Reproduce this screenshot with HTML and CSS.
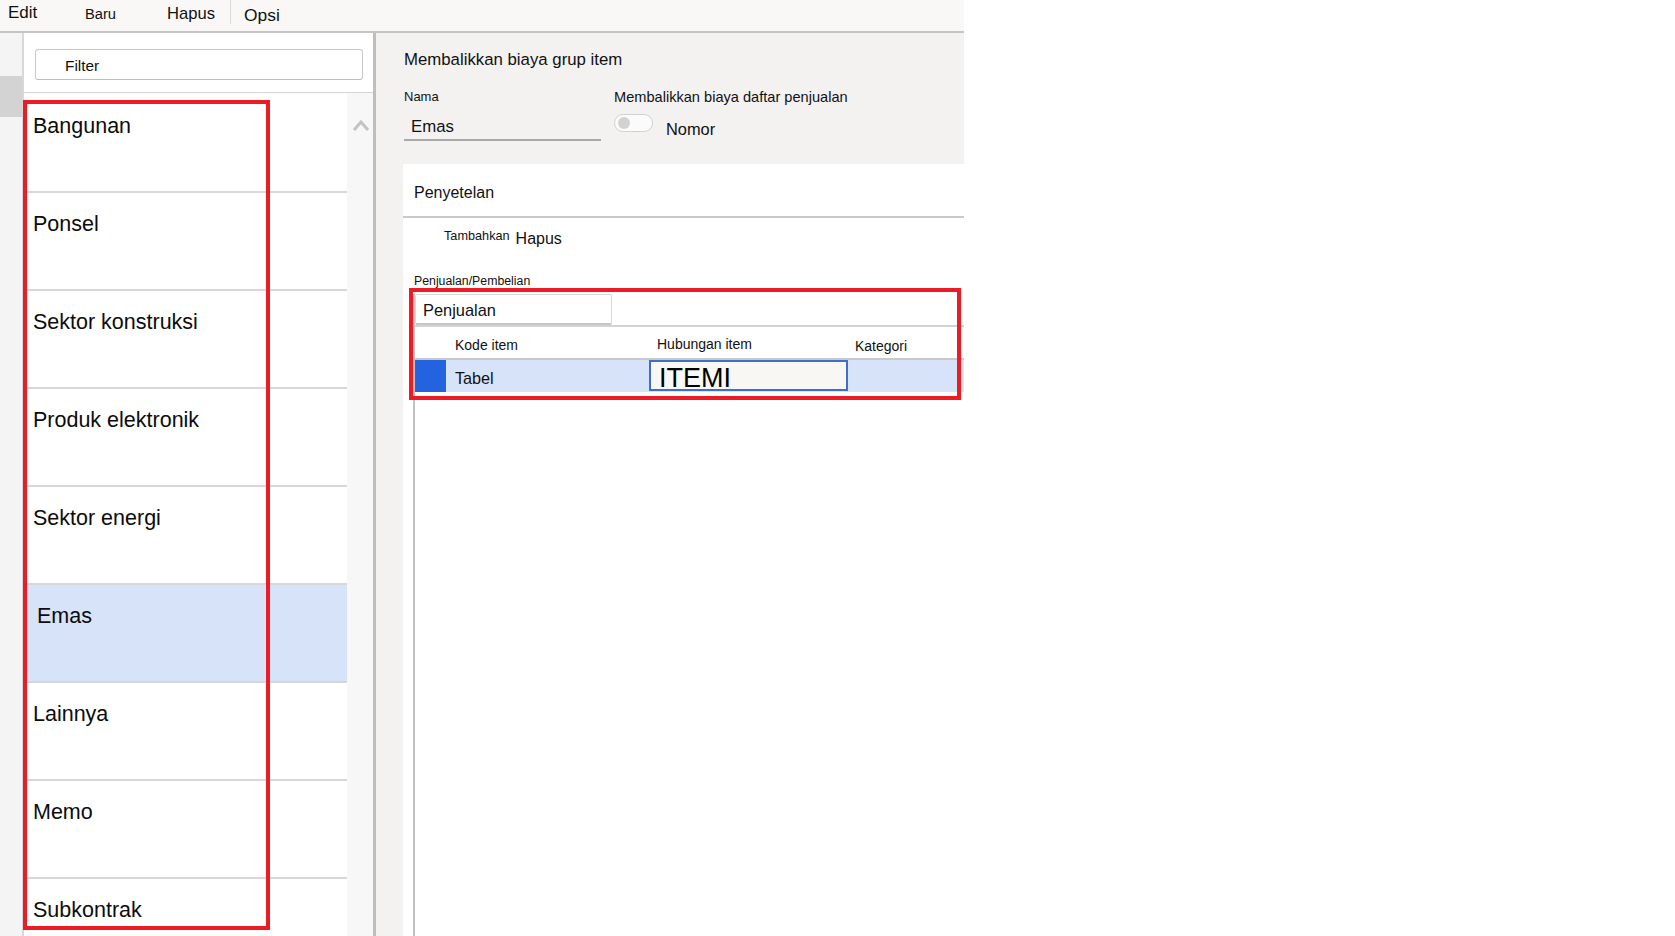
FILE: index.html
```html
<!DOCTYPE html>
<html lang="id">
<head>
<meta charset="utf-8">
<title>Membalikkan biaya grup item</title>
<link rel="stylesheet" href="styles.css">
</head>
<body>
<div class="app">
  <header class="toolbar">
    <span class="tb tb-edit">Edit</span>
    <span class="tb tb-baru">Baru</span>
    <span class="tb tb-hapus">Hapus</span>
    <span class="tb-sep"></span>
    <span class="tb tb-opsi">Opsi</span>
  </header>
  <div class="main">
    <div class="rail"><div class="rail-mark"></div></div>
    <aside class="listpane">
      <div class="filter-wrap"><div class="filter">Filter</div></div>
      <div class="list-area">
        <ul class="list">
          <li class="row">Bangunan</li>
          <li class="row">Ponsel</li>
          <li class="row">Sektor konstruksi</li>
          <li class="row">Produk elektronik</li>
          <li class="row">Sektor energi</li>
          <li class="row sel">Emas</li>
          <li class="row">Lainnya</li>
          <li class="row">Memo</li>
          <li class="row">Subkontrak</li>
        </ul>
        <div class="scroll">
          <svg class="chev" width="18" height="14" viewBox="0 0 18 14"><polyline points="2,12 9,4 16,12" fill="none" stroke="#c3c3c3" stroke-width="3"/></svg>
        </div>
      </div>
    </aside>
    <section class="detail">
      <div class="detail-head">
        <div class="dh-title">Membalikkan biaya grup item</div>
        <div class="dh-fields">
          <div class="field-name">
            <div class="lbl-sm">Nama</div>
            <div class="value">Emas</div>
          </div>
          <div class="field-toggle">
            <div class="lbl-md">Membalikkan biaya daftar penjualan</div>
            <div class="toggle-row">
              <span class="toggle"><span class="knob"></span></span>
              <span class="toggle-text">Nomor</span>
            </div>
          </div>
        </div>
      </div>
      <div class="card">
        <div class="card-title">Penyetelan</div>
        <div class="card-actions">
          <span class="act-add">Tambahkan</span>
          <span class="act-del">Hapus</span>
        </div>
        <div class="card-label">Penjualan/Pembelian</div>
        <div class="grid">
          <div class="grid-tabs"><div class="seg">Penjualan</div></div>
          <div class="thead">
            <div class="c0"></div>
            <div class="c1">Kode item</div>
            <div class="c2">Hubungan item</div>
            <div class="c3">Kategori</div>
          </div>
          <div class="trow">
            <div class="c0 mark"></div>
            <div class="c1">Tabel</div>
            <div class="c2"><div class="cellinput">ITEMI</div></div>
            <div class="c3"></div>
          </div>
        </div>
        <div class="annot annot-grid"></div>
      </div>
    </section>
    <div class="annot annot-list"></div>
  </div>
</div>
</body>
</html>
```

FILE: styles.css
```css
* { box-sizing: border-box; }
html, body { margin: 0; padding: 0; }
body {
  background: #ffffff;
  font-family: "Liberation Sans", Arial, sans-serif;
  color: #111111;
  width: 1675px;
  height: 936px;
  overflow: hidden;
}
.app { width: 964px; height: 936px; display: flex; flex-direction: column; }

/* toolbar */
.toolbar {
  height: 33px;
  background: #f9f8f7;
  border-bottom: 2px solid #c4c4c4;
  display: flex;
  align-items: flex-start;
  padding-left: 8px;
  flex: none;
}
.tb { line-height: 20px; white-space: nowrap; }
.tb-edit { font-size: 17px; padding-top: 3px; width: 77px; }
.tb-baru { font-size: 14.7px; padding-top: 4px; width: 82px; }
.tb-hapus { font-size: 16.6px; padding-top: 4px; width: 63px; }
.tb-sep { width: 1px; height: 24px; background: #d9d9d9; margin-right: 13px; }
.tb-opsi { font-size: 17.4px; padding-top: 5px; }

/* main */
.main { position: relative; display: flex; height: 903px; overflow: hidden; }
.rail {
  width: 24px;
  flex: none;
  background: #f4f4f4;
  border-right: 2px solid #d8d8d8;
}
.rail-mark { margin-top: 43px; height: 41px; background: #d3d3d3; }

.listpane {
  width: 352px;
  flex: none;
  background: #ffffff;
  border-right: 3px solid #bebebe;
  display: flex;
  flex-direction: column;
}
.filter-wrap {
  height: 60px;
  padding: 16px 10px 0 11px;
  border-bottom: 1px solid #d5d5d5;
  flex: none;
}
.filter {
  height: 31px;
  border: 1px solid #c9c9c9;
  border-bottom-color: #bdbdbd;
  border-radius: 3px;
  padding: 2px 0 0 29px;
  font-size: 15.4px;
  line-height: 27px;
}
.list-area { flex: 1; display: flex; min-height: 0; }
.list {
  flex: 1;
  list-style: none;
  margin: 0;
  padding: 2px 0 0 3px;
}
.row {
  height: 98px;
  border-bottom: 2px solid #d7d7d7;
  padding: 18px 0 0 6px;
  font-size: 21.5px;
  line-height: 26px;
  color: #0c0c0c;
}
.row.sel { background: #d6e3f9; padding-left: 10px; }
.scroll { width: 26px; flex: none; background: #f7f7f7; }
.chev { display: block; margin: 25px 0 0 5px; }

/* detail */
.detail {
  flex: 1;
  background: #f3f2f1;
  display: flex;
  flex-direction: column;
}
.detail-head { height: 131px; padding: 17px 0 0 28px; flex: none; }
.dh-title { font-size: 16.8px; line-height: 20px; }
.dh-fields { display: flex; margin-top: 17px; }
.field-name { width: 197px; }
.lbl-sm { font-size: 13px; line-height: 20px; }
.value {
  margin-top: 9px;
  padding: 0 0 1px 7px;
  font-size: 16.8px;
  line-height: 22px;
  border-bottom: 2px solid #a9a9a9;
}
.field-toggle { margin-left: 13px; }
.lbl-md { font-size: 14.6px; line-height: 20px; }
.toggle-row { display: flex; align-items: flex-start; margin-top: 6px; }
.toggle {
  margin-top: 1px;
  width: 39px;
  height: 18px;
  border: 1px solid #d2d2d2;
  border-radius: 9px;
  background: #fbfbfb;
  display: flex;
  align-items: center;
  padding-left: 3px;
}
.knob { width: 12px; height: 12px; border-radius: 50%; background: #d2d2d2; }
.toggle-text { margin-left: 13px; padding-top: 6px; font-size: 16.4px; line-height: 20px; }

.card {
  position: relative;
  flex: 1;
  margin-left: 27px;
  background: #ffffff;
  display: flex;
  flex-direction: column;
}
.card-title {
  height: 54px;
  padding: 19px 0 0 11px;
  font-size: 16px;
  line-height: 20px;
  border-bottom: 2px solid #c9c9c9;
  flex: none;
}
.card-actions { display: flex; align-items: flex-start; padding: 10px 0 0 41px; height: 31px; flex: none; }
.act-add { font-size: 12.7px; line-height: 16px; }
.act-del { font-size: 16px; line-height: 20px; margin-left: 6px; padding-top: 1px; }
.card-label { margin-top: 25px; padding-left: 11px; font-size: 12.3px; line-height: 15px; flex: none; }

.grid {
  flex: 1;
  margin: 5px 0 0 10px;
  border-left: 2px solid #c2c2c2;
}
.grid-tabs { height: 33px; border-bottom: 2px solid #d3d3d3; }
.seg {
  width: 197px;
  height: 31px;
  border: 1px solid #d9d9d9;
  border-bottom: 2px solid #c6c6c6;
  border-radius: 2px;
  padding: 1px 0 0 7px;
  font-size: 16.4px;
  line-height: 28px;
}
.thead {
  height: 33px;
  display: flex;
  border-bottom: 2px solid #c9c9c9;
  font-size: 14px;
  line-height: 17px;
}
.thead > div { padding-top: 10px; }
.c0 { width: 31px; flex: none; }
.c1 { width: 203px; flex: none; padding-left: 9px; }
.c2 { width: 206px; flex: none; padding-left: 8px; }
.c3 { flex: 1; }
.thead .c2 { padding-top: 9px; }
.thead .c3 { padding-top: 11px; }
.trow { height: 32px; display: flex; background: #d6e3f8; }
.trow .c1 { font-size: 16.2px; line-height: 32px; padding-top: 2px; }
.trow .c2 { padding-left: 0; }
.mark { background: #2363df; }
.cellinput {
  width: 199px;
  height: 31px;
  border: 2px solid #3b6fc9;
  background: #f8f7f3;
  padding: 3px 0 0 8px;
  font-size: 27px;
  line-height: 27px;
  color: #000;
}

/* annotations */
.annot { position: absolute; border: 4px solid #ed1c24; pointer-events: none; }
.annot-list { left: 23px; top: 67px; width: 247px; height: 830px; }
.annot-grid { left: 6px; top: 124px; width: 552px; height: 112px; }
```
